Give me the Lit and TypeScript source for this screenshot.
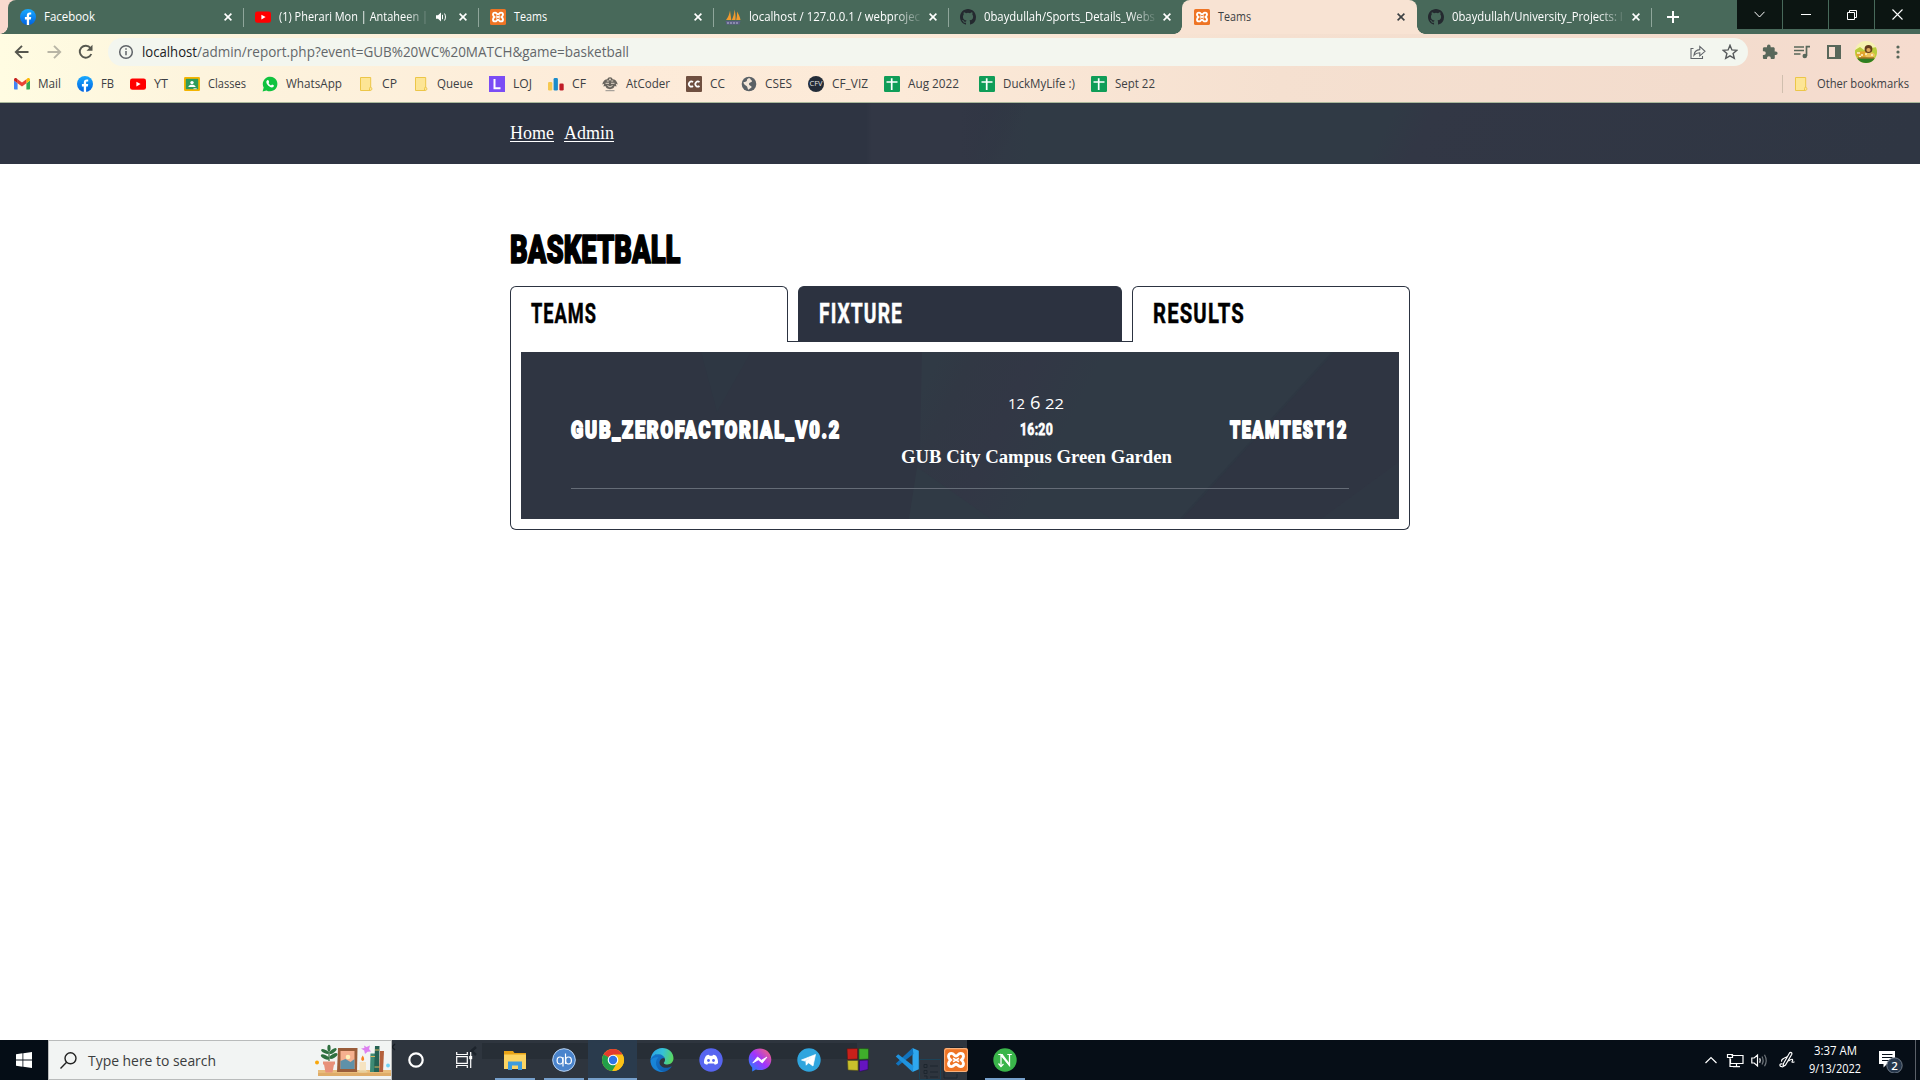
import { LitElement, html, css, svg, type TemplateResult } from "lit";
import { customElement } from "lit/decorators.js";

/** Text set to an exact width; the capitals are centred in the line box. */
const fit = (text: string, width: number, size: number, cls = "", height = Math.round(size * 1.5)) => html`
  <svg class="fit ${cls}" width=${width} height=${height} font-size=${size}>
    <text x="0" y=${height / 2 + size * 0.357} textLength=${width} lengthAdjust="spacingAndGlyphs">${text}</text>
  </svg>`;

const icon = (body: TemplateResult | unknown, size = 16, box = 16) => html`
  <svg class="ic" width=${size} height=${size} viewBox="0 0 ${box} ${box}">${body}</svg>`;

const facebook = svg`<defs><linearGradient id="fbg" x2="0" y2="1"><stop stop-color="#19aaff"/><stop offset="1" stop-color="#0062e0"/></linearGradient></defs>
  <circle cx="8" cy="8" r="8" fill="url(#fbg)"/><path d="M6.8 16v-5.6H4.9V8h1.9V6.6c0-2.1 1-3.2 3-3.2.5 0 1 .1 1.4.2v2h-1c-.9 0-1.1.4-1.1 1.2V8h2.1l-.4 2.4H9.1V16z" fill="#fff"/>`;
const youtube = svg`<rect y="2.4" width="16" height="11.4" rx="2.4" fill="#f00"/><path d="M6.4 5.7v4.8L10.6 8.1z" fill="#fff"/>`;
const xampp = svg`<rect width="16" height="16" rx="1.6" fill="#ee7424"/><path d="M5 3.600c-1.300 0-2 .9-2 2s.8 1.800 1.400 2.400c-.7.600-1.400 1.300-1.400 2.400 0 1.200.8 2 2 2 1.800 0 1.600-1.600 3-1.600s1.200 1.600 3 1.600c1.200 0 2-.8 2-2 0-1.100-.7-1.800-1.400-2.400.6-.6 1.400-1.300 1.400-2.400s-.7-2-2-2c-1.800 0-1.600 1.700-3 1.700S6.800 3.600 5 3.600z" fill="none" stroke="#fff" stroke-width="1.900"/><path d="M6 6.800 10 9.200M10 6.800 6 9.200" stroke="#fff" stroke-width="1.100"/>`;
const phpmyadmin = svg`<path d="M5 1.500 6.300 11H1C3 8.500 4.500 5 5 1.500zM9.500.500C10.500 4 10.800 8 10.500 11H6.800C8.400 8 9.400 4 9.500.500zM12 2.500c1.500 2.500 3 5.500 3.500 8.500h-4.300c.8-3 1-5.500.8-8.500z" fill="#f29a2e"/><path d="M.5 12h15l-1 3.500h-13z" fill="#5c5f86"/><path d="M3 13v2M6 13v2M9 13v2M12 13v2" stroke="#c3c5da" stroke-width=".9"/>`;
const github = svg`<path fill="#24292f" d="M8 0C3.580 0 0 3.580 0 8c0 3.540 2.290 6.530 5.470 7.590.4.070.55-.17.55-.38v-1.490c-2.010.37-2.530-.49-2.690-.94-.09-.23-.48-.94-.82-1.130-.28-.15-.68-.52-.01-.53.63-.01 1.080.58 1.230.82.72 1.210 1.870.87 2.330.66.070-.52.28-.87.510-1.070-1.780-.2-3.640-.89-3.640-3.950 0-.87.31-1.590.82-2.150-.08-.2-.36-1.020.08-2.120 0 0 .67-.21 2.200.82a7.420 7.420 0 0 1 4 0c1.530-1.040 2.200-.82 2.200-.82.44 1.100.16 1.920.08 2.120.51.56.82 1.270.82 2.150 0 3.070-1.870 3.750-3.650 3.950.29.25.54.73.54 1.480v2.200c0 .21.15.46.55.38A8 8 0 0 0 16 8c0-4.420-3.580-8-8-8z"/>`;
const gmail = svg`<path d="M1 13.500h2.600V7.300L0 4.600v7.900c0 .6.400 1 1 1z" fill="#4285f4"/><path d="M12.400 13.500H15c.6 0 1-.4 1-1V4.600l-3.600 2.700z" fill="#34a853"/><path d="M12.400 3.300v4L16 4.600V3.500c0-1.300-1.500-2-2.500-1.200z" fill="#fbbc04"/><path d="M3.600 7.300v-4L8 6.600l4.400-3.300v4L8 10.600z" fill="#ea4335"/><path d="M0 3.500v1.100l3.600 2.700v-4L2.500 2.300C1.500 1.500 0 2.200 0 3.500z" fill="#c5221f"/>`;
const classroom = svg`<rect y="1" width="16" height="14" rx="1.200" fill="#f4b400"/><rect x="1.800" y="2.800" width="12.400" height="10.400" fill="#2e9b5b"/><circle cx="8" cy="6.600" r="1.700" fill="#fff"/><path d="M4.300 11c.3-1.800 2-2.300 3.700-2.300s3.400.5 3.700 2.300z" fill="#fff"/><path d="M9.500 13.200h3.200v-1H9.500z" fill="#e0e0e0"/>`;
const whatsapp = svg`<path d="M.6 15.500 1.700 11.600A7.300 7.300 0 1 1 4.500 14.400z" fill="#10c33f"/><path d="M5.300 4.300c.9-.7 1.300 0 1.800 1.600.1.400-.6 1-.6 1.200.5 1.100 1.400 1.900 2.500 2.300.3 0 .8-.9 1.100-.9.500.1 1.800.8 1.800 1 .1 1.200-1 2-2 2C7.700 11.400 4.500 8.500 4.300 6c0-.6.300-1.200 1-1.700z" fill="#fff"/>`;
const folder = svg`<path d="M2.500 1.500h10.200v9.700c1 .3 1.100.9 1.100 1.600 0 1.200-.5 1.700-1.700 1.700H2.500z" fill="#fde595" stroke="#ecc648"/><path d="M11.500 14.500v-2c0-.9.400-1.300 1.200-1.300" fill="none" stroke="#ecc648"/>`;
const loj = svg`<rect width="16" height="16" fill="#7b4df5"/><path d="M5.500 3v9.300h6" fill="none" stroke="#fff" stroke-width="2"/>`;
const codeforces = svg`<rect x="0" y="6" width="4.300" height="8.500" rx="1.200" fill="#f6c850"/><rect x="5.600" y="2" width="4.300" height="12.500" rx="1.200" fill="#1b8ccb"/><rect x="11.400" y="7.500" width="4.300" height="7" rx="1.200" fill="#c01c28"/>`;
const atcoder = svg`<path d="M8 1.200c1.500 0 2.500.8 2.600 2C13 3.200 15 5 15.800 8.500l-2-.8.800 2.800-2-.6c-.5 1.800-1.800 2.900-4.600 3.300-2.800-.4-4.100-1.500-4.600-3.300l-2 .6.800-2.800-2 .8C1 5 3 3.200 5.400 3.200c.1-1.200 1.100-2 2.600-2z" fill="#6a655e"/><path d="M4.800 5h2M9.200 5h2M3.500 7.300h3.500M9 7.300h3.500M5.500 9.500 8 11l2.500-1.500" stroke="#f1e4d4" stroke-width=".9" fill="none"/><circle cx="8" cy="3.500" r=".9" fill="#ece0d0"/><path d="M3.500 14.700h9" stroke="#777" stroke-width=".8"/>`;
const codechef = svg`<rect width="16" height="16" rx="1" y="0" fill="#6f4f40"/><path d="M7 6.200A2.500 2.500 0 1 0 7 10M13.500 6.200a2.500 2.500 0 1 0 0 3.800" fill="none" stroke="#fff" stroke-width="1.700"/>`;
const globe = svg`<circle cx="8" cy="8" r="7.300" fill="#5a6166"/><path d="M2.500 6c2 0 3.500-.5 3.500-2s1.500-2 3-1.800C9.500 4 11 4 11 5.200 10.500 6.800 8 6 8 8s3 1.500 2.500 3.200S8 12 8 13.700C6 13 7 11 5.500 10S2.500 8.500 2.500 6z" fill="#f3e6d8"/>`;
const cfviz = svg`<circle cx="8" cy="8" r="8" fill="#232c38"/><text x="1.500" y="10.400" font-size="6.500" textLength="13" lengthAdjust="spacingAndGlyphs" fill="#e6e6e6">CFV</text>`;
const sheets = svg`<rect width="16" height="16" rx="1.200" fill="#0f9d58"/><path d="M2.500 6h11M7.700 2.200V14" stroke="#fff" stroke-width="1.700"/>`;

const closeX = () => html`<svg class="ic close" width="8" height="8" viewBox="0 0 8 8"><path d="M.6.6 7.400 7.400M7.400.6.6 7.400" stroke="currentColor" stroke-width="1.600"/></svg>`;

interface Tab { icon: unknown; text: string; width: number; fade?: boolean; audio?: boolean; cls?: string }
const tabs: Tab[] = [
  { icon: facebook, text: "Facebook", width: 51, cls: "first" },
  { icon: youtube, text: "(1) Pherari Mon | Antaheen |", width: 149, fade: true, audio: true },
  { icon: xampp, text: "Teams", width: 33 },
  { icon: phpmyadmin, text: "localhost / 127.0.0.1 / webprojec", width: 171, fade: true },
  { icon: github, text: "0baydullah/Sports_Details_Webs", width: 171, fade: true, cls: "flush" },
  { icon: xampp, text: "Teams", width: 33, cls: "active" },
  { icon: github, text: "0baydullah/University_Projects: I", width: 171, fade: true, cls: "last" },
];

const bookmarks: [unknown, string, number, string?][] = [
  [gmail, "Mail", 23], [facebook, "FB", 13], [youtube, "YT", 14], [classroom, "Classes", 38],
  [whatsapp, "WhatsApp", 56], [folder, "CP", 15], [folder, "Queue", 36], [loj, "LOJ", 19],
  [codeforces, "CF", 14], [atcoder, "AtCoder", 44], [codechef, "CC", 15], [globe, "CSES", 27],
  [cfviz, "CF_VIZ", 36], [sheets, "Aug 2022", 51, "wide"], [sheets, "DuckMyLife :)", 72], [sheets, "Sept 22", 40],
];

@customElement("browser-chrome")
class BrowserChrome extends LitElement {
  static styles = css`
    :host { display: block; height: 103px; background: linear-gradient(90deg, #fffce2 0, #fdf4dd 200px, #fdebd9 620px, #fcead8 900px, #f5e0d0 1280px, #f3dccd 1700px, #f6dccf 1920px); box-sizing: border-box; border-bottom: 1px solid #a9b79b; font-family: "Open Sans", "Noto Sans", sans-serif; color: #3c4043; }
    svg { display: block; flex: none; }
    .fit { fill: currentColor; overflow: visible; }
    .strip { display: flex; height: 34px; background: linear-gradient(90deg, #f9d9ce 20px, #48695a 20px); }
    .edge { width: 8px; background: radial-gradient(circle at 0 0, #f9d9ce 7.5px, #48695a 8px) 0 100% / 8px 8px no-repeat; }
    .tab { width: 235px; box-sizing: border-box; display: flex; align-items: center; padding: 0 11px 0 12px; gap: 8px; color: #fff; position: relative; }
    .tab::after { content: ""; position: absolute; right: -1px; top: 8px; height: 19px; width: 1px; background: #8fa69b; }
    .first { background: #48695a; border-top-left-radius: 8px; }
    .flush { width: 234px; }
    .flush::after { display: none; }
    .last { width: 234px; }
    .active { background: #f8e3d3; color: #3c4043; border-radius: 8px 8px 0 0; width: 235px; padding-right: 12px; }
    .last { padding-left: 11px; }
    .active::before { content: ""; position: absolute; left: -8px; bottom: 0; width: 8px; height: 8px; background: radial-gradient(circle at 0 0, transparent 7.5px, #f8e3d3 8px); }
    .active::after { right: -8px; top: auto; bottom: 0; width: 8px; height: 8px; background: radial-gradient(circle at 100% 0, transparent 7.5px, #f8e3d3 8px); }
    .fade { -webkit-mask-image: linear-gradient(90deg, #000 85%, transparent 102%); mask-image: linear-gradient(90deg, #000 85%, transparent 102%); }
    .close { margin-left: auto; }
    .plus { margin: 11px 0 0 16px; }
    .win { margin-left: auto; display: flex; height: 29px; gap: 1px; width: 183px; }
    .win span { flex: 1; background: #0c1512; display: grid; place-items: center; }
    .bar { display: flex; align-items: center; height: 28px; padding: 4px 0 0 14px; }
    .nav { display: flex; gap: 16px; width: 94px; flex: none; }
    .omni { display: flex; align-items: center; width: 1640px; flex: none; height: 28px; border-radius: 14px; background: #f3f6ef; box-sizing: border-box; padding: 0 10px 0 10px; }
    .host { color: #202124; margin-left: 8px; }
    .path { color: #63676a; }
    .right { margin-left: auto; display: flex; gap: 16px; }
    .tools { display: flex; align-items: center; gap: 16px; margin-left: 14px; flex: none; }
    .avatar { margin: 0 0 0 -3px; }
    .marks { display: flex; align-items: center; gap: 16px; height: 36px; padding: 0 11px 0 14px; }
    .mark { display: flex; align-items: center; gap: 8px; }
    .wide { margin-right: 4px; }
    .other { margin-left: auto; border-left: 1px solid #d0bfae; padding-left: 10px; }
  `;
  render() {
    return html`
      <div class="strip">
        <div class="edge"></div>
        ${tabs.map(t => html`<div class="tab ${t.cls ?? ""}">
          ${icon(t.icon)}${fit(t.text, t.width, 12, t.fade ? "fade" : "")}
          ${t.audio ? html`<svg width="11" height="10" viewBox="0 0 11 10"><path d="M0 3.200h2L5 .5v9L2 6.800H0z" fill="#fff"/><path d="M6.500 2.800v4.400M8.500 1.500c1.300 2 1.300 5 0 7" stroke="#fff" fill="none"/></svg>` : ""}
          ${closeX()}</div>`)}
        <svg class="plus" width="12" height="12" viewBox="0 0 12 12"><path d="M6 0v12M0 6h12" stroke="#fff" stroke-width="2"/></svg>
        <div class="win">
          <span><svg width="11" height="7" viewBox="0 0 11 7"><path d="M.5.8 5.500 6 10.500.8" fill="none" stroke="#fff"/></svg></span>
          <span><svg width="10" height="2" viewBox="0 0 10 2"><path d="M0 .5h10" stroke="#fff"/></svg></span>
          <span><svg width="10" height="10" viewBox="0 0 10 10"><path d="M.5 2.500h7v7h-7zM2.500 2.500v-2h7v7h-2" fill="none" stroke="#fff"/></svg></span>
          <span><svg width="11" height="11" viewBox="0 0 11 11"><path d="M.5.500l10 10M10.500.500l-10 10" stroke="#fff" stroke-width="1.100"/></svg></span>
        </div>
      </div>
      <div class="bar">
        <div class="nav">
          ${icon(svg`<path d="M14.500 8H2M8 1.800 1.800 8 8 14.200" fill="none" stroke="#56574e" stroke-width="1.900"/>`)}
          ${icon(svg`<path d="M1.500 8H14M8 1.800 14.200 8 8 14.200" fill="none" stroke="#b8b5a5" stroke-width="1.900"/>`)}
          ${icon(svg`<path d="M13.300 10A6 6 0 1 1 12.500 4" fill="none" stroke="#56574e" stroke-width="1.900"/><path d="M14.500.800v6H8.500z" fill="#56574e"/>`)}
        </div>
        <div class="omni">
          ${icon(svg`<circle cx="8" cy="8" r="6.300" fill="none" stroke="#5f6368" stroke-width="1.500"/><path d="M8 7v4.300M8 4.300v1.500" stroke="#5f6368" stroke-width="1.500"/>`)}
          ${fit("localhost", 55, 14, "host")}${fit("/admin/report.php?event=GUB%20WC%20MATCH&game=basketball", 432, 14, "path")}
          <div class="right">
            ${icon(svg`<path d="M3.500 4.500H1v10h11.500V12" fill="none" stroke="#5f6368" stroke-width="1.100"/><path d="M4 11.200c.3-3.700 2-5.400 5.800-5.600V2.400l5.200 4.900-5.200 4.600V8.800c-2.500 0-4.300.6-5.800 2.400z" fill="none" stroke="#5f6368" stroke-width="1.100"/>`)}
            ${icon(svg`<path d="M8 1.300 9.900 5.900 14.900 6.300 11.100 9.500 12.300 14.400 8 11.800 3.700 14.400 4.900 9.500 1.100 6.300 6.100 5.900z" fill="none" stroke="#56595b" stroke-width="1.400"/>`)}
          </div>
        </div>
        <div class="tools">
          ${icon(svg`<path d="M13.700 7.400h-1V4.600c0-.8-.6-1.400-1.400-1.400H8.600v-1a1.800 1.800 0 0 0-3.600 0v1H2.300C1.500 3.200.9 3.800.9 4.600v2.600h1a1.900 1.900 0 0 1 0 3.800h-1v2.700c0 .8.6 1.400 1.400 1.400H5v-1a1.900 1.900 0 0 1 3.800 0v1h2.600c.8 0 1.400-.6 1.400-1.400V11h1a1.800 1.800 0 0 0 0-3.600z" fill="#58675a"/>`)}
          ${icon(svg`<path d="M0 3h10M0 6.500h10M0 10h6.500M12.500 12V2.600H16" fill="none" stroke="#58675a" stroke-width="1.700"/><circle cx="10.800" cy="12" r="2.300" fill="#58675a"/>`)}
          ${icon(svg`<path d="M2 2h12v12H2z" fill="none" stroke="#58675a" stroke-width="2"/><path d="M9 2h5v12H9z" fill="#58675a"/>`)}
          <svg class="avatar" width="22" height="22" viewBox="0 0 22 22"><defs><clipPath id="av"><circle cx="11" cy="11" r="11"/></clipPath></defs><g clip-path="url(#av)"><rect width="22" height="22" fill="#f6f2b0"/><path d="M0 9 5 6l4 3 7-2 6-1v16H0z" fill="#b9cc3c"/><path d="M0 17.500h22V22H0z" fill="#2f7d22"/><ellipse cx="8" cy="13.500" rx="7" ry="3.300" fill="#e3a62f"/><ellipse cx="15" cy="14" rx="5" ry="3" fill="#efc25a"/><circle cx="13.500" cy="8" r="3.900" fill="#633d1c"/><circle cx="13.500" cy="9" r="2.100" fill="#e0a95c"/><path d="M2 12h3M6 14h2M10 13h2M16 14h2M4 15.500h2" stroke="#fff3cc" stroke-width="1.300"/><path d="M3 17h16" stroke="#8a4a18"/></g></svg>
          ${icon(svg`<g fill="#58675a"><circle cx="5" cy="3" r="1.600"/><circle cx="5" cy="8" r="1.600"/><circle cx="5" cy="13" r="1.600"/></g>`)}
        </div>
      </div>
      <div class="marks">
        ${bookmarks.map(([i, t, w, c]) => html`<div class="mark ${c ?? ""}">${icon(i)}${fit(t, w, 12)}</div>`)}
        <div class="mark other">${icon(folder)}${fit("Other bookmarks", 92, 12)}</div>
      </div>`;
  }
}

@customElement("match-page")
class MatchPage extends LitElement {
  static styles = css`
    :host { display: block; height: 937px; background: #fff; font-family: "Liberation Serif", serif; }
    svg { display: block; flex: none; }
    .fit { fill: currentColor; overflow: visible; }
    .head { display: flex; gap: 10px; height: 61px; padding: 0 510px; box-sizing: border-box; color: #fff; font-size: 18px; line-height: 61px; background: linear-gradient(90deg, transparent 866px, #323745 872px, #323745 960px, transparent 1030px), linear-gradient(118deg, #2e3442 0, #2e3442 860px, #303a45 910px, #303a45 1235px, #323745 1270px, #2f3643 1700px); }
    .head a { color: #fff; text-decoration: underline; text-underline-offset: 2px; }
    main { width: 900px; margin: 0 auto; padding-top: 58px; }
    .display { font-family: Roboto, "DejaVu Sans Condensed", sans-serif; font-weight: 900; stroke: currentColor; stroke-width: 1.7; stroke-linejoin: round; }
    .team { letter-spacing: 2.4px; stroke-width: 1.9; margin-top: -4px; }
    .label { font-family: Roboto, sans-serif; font-weight: 700; letter-spacing: 1.6px; stroke: currentColor; stroke-width: .5; }
    .time { letter-spacing: .4px; stroke-width: .8; }
    .tabs { display: flex; margin-top: 11px; height: 56px; }
    .tab { width: 278px; box-sizing: border-box; border: 1px solid #2c3341; border-bottom: 0; border-radius: 6px 6px 0 0; padding: 8px 0 0 20px; }
    .tab.on { width: 324px; background: #2c3240; color: #fff; }
    .gap { width: 10px; box-sizing: border-box; border-bottom: 1px solid #2c3341; }
    .body { height: 188px; box-sizing: border-box; border: 1px solid #2c3341; border-top: 0; border-radius: 0 0 6px 6px; padding: 10px; display: flex; }
    .match { position: relative; flex: 1; padding: 37px 50px 0; color: #fff; background: #2f3542; display: flex; flex-direction: column; }
    .facets { position: absolute; inset: 0; }
    .row { position: relative; display: grid; grid-template-columns: 270px 1fr 119px; align-items: center; height: 83px; }
    .mid { display: flex; flex-direction: column; align-items: center; padding-left: 1px; }
    .date { font-family: "Open Sans", Lato, sans-serif; }
    .place { font-weight: 700; }
    .rule { position: relative; height: 1px; margin-top: 16px; background: #656c77; }
  `;
  render() {
    return html`
      <div class="head"><a>Home</a><a>Admin</a></div>
      <main>
        ${fit("BASKETBALL", 170.5, 39.3, "display", 53)}
        <div class="tabs">
          <div class="tab">${fit("TEAMS", 66, 28.2, "label", 36)}</div>
          <div class="gap"></div>
          <div class="tab on">${fit("FIXTURE", 84, 28.2, "label", 36)}</div>
          <div class="gap"></div>
          <div class="tab">${fit("RESULTS", 92, 28.2, "label", 36)}</div>
        </div>
        <div class="body">
          <div class="match">
            <svg class="facets" width="878" height="167" viewBox="0 0 878 167">
              <defs><linearGradient id="f1" gradientUnits="userSpaceOnUse" x1="400" y1="40" x2="620" y2="150"><stop stop-color="#303a45"/><stop offset=".12" stop-color="#313844"/><stop offset=".35" stop-color="#323745"/><stop offset=".6" stop-color="#303a45"/></linearGradient></defs>
              <path d="M180 0h50l-34 60z" fill="#2e3743"/>
              <path d="M401 0H812L660 167H388L399 100z" fill="url(#f1)"/>
              <path d="M388 167 396 115 470 167z" fill="#303a45"/>
              <path d="M812 0 660 167" stroke="#2e3743" stroke-width="2"/>
              <path d="M878 110v57H800z" fill="#303945" opacity=".6"/>
            </svg>
            <div class="row">
              ${fit("GUB_ZEROFACTORIAL_V0.2", 270, 24.3, "display team", 28)}
              <div class="mid">
                <svg class="fit date" width="56" height="27"><text x="0" y="20" font-size="14.500" textLength="17" lengthAdjust="spacingAndGlyphs">12</text><text x="22" y="20" font-size="18" textLength="10.500" lengthAdjust="spacingAndGlyphs">6</text><text x="37" y="20" font-size="14.500" textLength="19" lengthAdjust="spacingAndGlyphs">22</text></svg>
                ${fit("16:20", 33, 17.4, "label time", 26)}
                ${fit("GUB City Campus Green Garden", 271, 18, "place", 30)}
              </div>
              ${fit("TEAMTEST12", 118, 24.3, "display team", 28)}
            </div>
            <div class="rule"></div>
          </div>
        </div>
      </main>`;
  }
}

const explorer = svg`<path d="M1 3h9l1.500 2H23v16H1z" fill="#e8a317"/><path d="M1 6.500h22V21H1z" fill="#fcd462"/><path d="M5 13.500h14V22h-4v-4.500H9V22H5z" fill="#3e9bdc"/>`;
const qb = svg`<circle cx="12" cy="12" r="11.300" fill="#4a84cc" stroke="#b9d4f2"/><ellipse cx="8" cy="12.500" rx="2.900" ry="3.500" fill="none" stroke="#fff" stroke-width="1.200"/><path d="M11 9v9.500M13.500 5.500v10.500" stroke="#fff" stroke-width="1.200"/><ellipse cx="16.500" cy="12.500" rx="2.900" ry="3.500" fill="none" stroke="#fff" stroke-width="1.200"/>`;
const chrome = svg`<circle cx="12" cy="12" r="11" fill="#fbc116"/><path d="M12 12 2.500 6.500A11 11 0 0 1 21.500 6.500z" fill="#e33b2e"/><path d="M2.500 6.500A11 11 0 0 0 11.300 23L16.500 14z" fill="#229f49"/><path d="M12 6.500h9.500A11 11 0 0 1 11.300 23L16.800 14.800z" fill="#fbc116"/><circle cx="12" cy="12" r="5.300" fill="#fff"/><circle cx="12" cy="12" r="4.200" fill="#2f75e6"/>`;
const edge = svg`<defs><linearGradient id="e1" x1="0" y1=".3" x2="1" y2=".5"><stop stop-color="#2aa3e8"/><stop offset=".5" stop-color="#35c1d8"/><stop offset="1" stop-color="#5ad85c"/></linearGradient><linearGradient id="e2" x2="1" y2="1"><stop stop-color="#1577d0"/><stop offset="1" stop-color="#0f5aa8"/></linearGradient></defs>
  <path d="M.5 12.500C.5 8 4 6 8.500 6c4 0 6 2 6.500 4.500-3-1-5.500 1-5.500 4 0 3.800 4.500 6.300 9 5 1.500-.4 2.500-1 3.300-1C19.500 22 16 24 12 24 5 24 .5 19 .5 12.500z" fill="url(#e2)"/>
  <path d="M8.500 9.500C6.500 11 6 13 6 15c0 4.500 3.500 8.300 8 8.700C8 25 .5 20 .5 12.500 3 9.500 6 9 8.500 9.500z" fill="#1b8ee0" opacity=".7"/>
  <path d="M.6 11.500C1.200 5 6 0 12.200 0 18.800 0 23.500 4.800 23.500 10.300c0 3.700-2.700 6.200-6 6.200-2.300 0-4-.7-3.700-1.800.9-1 1.300-2 1.200-3.200C14.700 8.300 11.700 6.300 8 6.300 4.500 6.300 1.800 8.300.6 11.500z" fill="url(#e1)"/>`;
const discord = svg`<circle cx="12" cy="12" r="11.700" fill="#5765f0"/><path d="M7 7.700c1-.5 2-.8 3-.9l.5.900h3l.5-.9c1 .1 2 .4 3 .9 1.500 2.300 2.200 4.800 2 7.600-1 .8-2 1.200-3.200 1.500l-.8-1.300H9l-.8 1.300c-1.200-.3-2.200-.7-3.200-1.500-.2-2.800.5-5.300 2-7.600z" fill="#fff"/><circle cx="9.500" cy="12.500" r="1.400" fill="#5765f0"/><circle cx="14.500" cy="12.500" r="1.400" fill="#5765f0"/>`;
const messenger = svg`<defs><linearGradient id="ms" x1="0" y1="1" x2="1" y2="0"><stop stop-color="#0a8fff"/><stop offset=".5" stop-color="#a033ff"/><stop offset="1" stop-color="#ff6a68"/></linearGradient></defs><path d="M12 .5C5.500.5.700 5.200.700 11.500c0 3.200 1.300 6 3.500 8v4l3.700-2c1.300.4 2.700.6 4.100.6 6.500 0 11.300-4.500 11.300-10.600C23.300 5.200 18.500.5 12 .5z" fill="url(#ms)"/><path d="M4.800 15 9.500 9l4 3.200L19 9l-4.700 6-4-3.200z" fill="#fff" stroke="#fff" stroke-width=".8"/>`;
const telegram = svg`<circle cx="12" cy="12" r="11.700" fill="#2fa5de"/><path d="M4.500 12 18.500 6.500 16 18l-4.500-3.200-2.300 2.400-.4-4.200L16 8.500 7.500 13z" fill="#fff" stroke="#fff" stroke-width=".7"/>`;
const codeblocks = svg`<path d="M1 .8 11.500.5V11L1.500 11.500z" fill="#c9201a" stroke="#5a1512" stroke-width=".6"/><path d="M13 .5 22.500.800V11L13 11.500z" fill="#3fae2b" stroke="#1f4d18" stroke-width=".6"/><path d="M1.500 12.500H12V22.500L2 22z" fill="#c9c02b" stroke="#55511a" stroke-width=".6"/><path d="M13.500 12.500 22 12v9.500L13.500 23.500z" fill="#6514c0" stroke="#2a0a55" stroke-width=".6"/>`;
const vscode = svg`<path d="M17.500 0 23.800 2.800v18.400L17.500 24z" fill="#2ea8f0"/><path d="M17.500 0 .8 15.500 3.200 17.800 18.500 6z" fill="#1173bd"/><path d="M17.500 24 .8 8.500 3.200 6.200 18.500 18z" fill="#1f93de"/>`;
const ncircle = svg`<circle cx="12" cy="12" r="11.700" fill="#3ab54a"/><path d="M8 18.500V7L16.500 17.500V6.500" fill="none" stroke="#fff" stroke-width="1.300"/><path d="M7.300 6.500h2.500l7.200 9.500v1.500h-1z" fill="#fff"/><path d="M5.300 6.500h4.500M14.300 6.500h4.500M5.500 15.500 8 18.500l2.500-2.500" fill="none" stroke="#fff" stroke-width="1.200"/>`;
const xamppBig = svg`<g transform="scale(1.500)">${xampp}<rect x=".4" y=".4" width="15.200" height="15.200" rx="1.600" fill="none" stroke="#f7b27f" stroke-width=".7"/></g>`;

const apps: [unknown, string][] = [
  [explorer, "open"], [qb, "open"], [chrome, "open now"], [edge, ""], [discord, ""], [messenger, ""],
  [telegram, ""], [codeblocks, ""], [vscode, ""], [xamppBig, ""], [ncircle, "open"],
];

@customElement("task-bar")
class TaskBar extends LitElement {
  static styles = css`
    :host { display: flex; position: relative; height: 40px; background: linear-gradient(#272e36, #272e36) 482px 3px / 375px 16px no-repeat, linear-gradient(90deg, #2e353e 967px, #060e17 967px); color: #fff; font-family: "Open Sans", "Noto Sans", sans-serif; }
    svg { display: block; flex: none; }
    .fit { fill: currentColor; overflow: visible; }
    .ghost { position: absolute; left: 392px; top: 0; }
    .start { width: 48px; display: grid; place-items: center; background: #050d16; }
    .search { width: 344px; box-sizing: border-box; border: 1px solid #b9bbbb; background: #f2f4f3; display: flex; align-items: center; color: #3b3d3e; padding-left: 11px; gap: 11px; }
    .art { margin: -5px 0 0 auto; }
    .btn { width: 48px; display: grid; place-items: center; position: relative; }
    .apps { display: flex; margin-left: 2px; position: relative; }
    .app { width: 49px; height: 40px; display: grid; place-items: center; position: relative; }
    .open::after { content: ""; position: absolute; bottom: 0; left: 5px; right: 4px; height: 2px; background: #76a0cc; }
    .now { background: #2a3b4d; }
    .now::after { left: 0; right: 0; }
    .tray { margin-left: auto; display: flex; align-items: center; }
    .clock { display: flex; flex-direction: column; align-items: center; width: 54px; margin-left: 13px; }
    .note { margin-left: 17px; }
    .peek { width: 1px; height: 40px; background: #5a6068; margin: 0 4px 0 11px; }
  `;
  render() {
    return html`
      <svg class="ghost" width="575" height="40" viewBox="0 0 575 40" fill="none">
        <path d="M3 4 0 7l3 3" stroke="#161c23" stroke-width="1.300"/><path d="M84 7l-4.500 4 4.500 4" stroke="#1d242c" stroke-width="2.500"/>
        <path d="M527.500 19.500h21v20h-21z" stroke="#1c4358"/>
        <path d="M532 24.500h3v3h-3zM532 30.500h3v3h-3zM532 36h3v3M538 26h8M538 32h8M538 37h8" stroke="#1d262e"/>
        <path d="M552 30v8h13v-4M558 7.500h13" stroke="#1d262e"/>
      </svg>
      <div class="start"><svg width="16" height="16" viewBox="0 0 16 16"><path d="M0 2.200 6.500 1.300v6.300H0zM7.300 1.200 16 0v7.600H7.300zM0 8.400h6.500v6.300L0 13.800zM7.300 8.400H16V16l-8.700-1.200z" fill="#fff"/></svg></div>
      <div class="search">
        <svg width="17" height="17" viewBox="0 0 17 17"><circle cx="10.500" cy="6.300" r="5.500" fill="none" stroke="#222" stroke-width="1.400"/><path d="M6.600 10.300.5 16.400" stroke="#222" stroke-width="1.400"/></svg>
        ${fit("Type here to search", 128, 15.2)}
        <svg class="art" width="76" height="38" viewBox="0 0 76 38">
          <path d="M3 31h74v3H3z" fill="#e9bd7c"/><path d="M3 34h74v3H3z" fill="#dfac68"/>
          <circle cx="2" cy="23.500" r="2" fill="#f9a70b"/>
          <path d="M14 22V9" stroke="#2c6b3a" stroke-width="1.200"/>
          <g fill="#2f7040"><ellipse cx="10" cy="18" rx="4.500" ry="1.900" transform="rotate(25 10 18)"/><ellipse cx="18.500" cy="17" rx="4.500" ry="1.900" transform="rotate(-30 18.500 17)"/><ellipse cx="10" cy="12.500" rx="4.200" ry="1.700" transform="rotate(25 10 12.500)"/><ellipse cx="18" cy="12" rx="4.200" ry="1.700" transform="rotate(-35 18 12)"/><ellipse cx="14" cy="9" rx="1.600" ry="3.200"/></g>
          <path d="M8 22.500h12v3h-1l-1.500 8h-7L9 25.500H8z" fill="#e8917a"/>
          <path d="M23 9h19.500L42 33H22z" fill="#9a5d3a"/><path d="M25.500 12h14v18H25.500z" fill="#f6b08f"/><circle cx="33" cy="18" r="2.300" fill="#fff0b8"/><path d="M25.500 22l5-2 5 3 4-3v10h-14z" fill="#5f91a9"/>
          <path d="M44.500 23h6.500v10h-6.500z" fill="#f6e3c0"/><ellipse cx="47.700" cy="32.500" rx="5" ry="1.200" fill="#e8cf9c"/><path d="M47.700 16.500c2 3 2 5 0 5.500-2-.5-2-2.500 0-5.500z" fill="#f58220"/>
          <path d="M49 6.500 51.500 8 55 6.500 54 10l2 2.500-3.500.2L50 15l-.8-3.500L46 9.500l3.500-.5z" fill="#dd80f0"/>
          <path d="M55.500 14.500h4.500V33h-5z" fill="#3e8a74"/><path d="M60 7h4.500L64 33h-5z" fill="#246253"/><path d="M65 12h4l-1 21h-4z" fill="#b4603c"/><path d="M60 11h4.500M59.500 28h5M55.500 17.500h4.500" stroke="#d9b45d"/>
          <circle cx="73" cy="26.500" r="1.900" fill="#6fd2f5"/>
        </svg>
      </div>
      <div class="btn"><svg width="16" height="16" viewBox="0 0 16 16"><circle cx="8" cy="8" r="6.700" fill="none" stroke="#fff" stroke-width="2.200"/></svg></div>
      <div class="btn"><svg width="17" height="16" viewBox="0 0 17 16"><path d="M.7 0v2.500h10.600V0M.7 16v-2.500h10.600V16M.7 4.700h10.600v6.600H.7zM14.700 0v16" fill="none" stroke="#fff" stroke-width="1.200"/><path d="M13.200 4h3v3.200h-3z" fill="#fff"/></svg></div>
      <div class="apps">${apps.map(([i, c]) => html`<div class="app ${c}">${icon(i, 24, 24)}</div>`)}</div>
      <div class="tray">
        <svg width="90" height="18" viewBox="0 0 90 18" fill="none" stroke="#fff" stroke-width="1.200">
          <path d="M.5 12 6 6.500 11.500 12"/>
          <path d="M26.500 4.500H38v8H25.500V8M31.500 12.500v3M28 15.700h7M22.500 3.500h5v3h-5zM25 6.500v9h3"/>
          <g transform="translate(1 0)"><path d="M45.800 7h2.400L51.500 4v11L48.200 12h-2.400zM53.700 7.300c.7 1.300.7 3 0 4.400"/><path d="M56 5.500c1.300 2.300 1.300 5.700 0 8M58.500 3.700c2 3.500 2 8.100 0 11.600" stroke="#70767c"/></g>
          <g transform="translate(4 0)"><path d="M74.500 12.500 80.500 2c1-1.200 3-.3 2.300 1.300L76.500 14 74 15.500zM78.500 5.500c-4.500 1.700-7 4-5.500 5M79.500 10c3.500-2.700 5-2 3.700.3-.6 1.200.6 1.200 2.300.4M73.500 13c-3.300-1-3.500 3-.3 2.500"/></g>
        </svg>
        <div class="clock">${fit("3:37 AM", 43, 12)}${fit("9/13/2022", 52, 12)}</div>
        <svg class="note" width="25" height="26" viewBox="0 0 25 26"><path d="M0 4h16v13H8l-3.500 3.500V17H0z" fill="#fff"/><path d="M3 7.500h10.500M3 10.500h10.500M3 13.500h7" stroke="#07101a" stroke-width="1.100"/><circle cx="15.500" cy="18.500" r="7.700" fill="#26374c" stroke="#78828e" stroke-width=".9"/><text x="15.500" y="22.700" font-size="11.500" font-weight="600" text-anchor="middle" fill="#fff">2</text></svg>
        <div class="peek"></div>
      </div>`;
  }
}

@customElement("app-root")
class AppRoot extends LitElement {
  static styles = css`
    :host { display: block; width: 1920px; height: 1080px; overflow: hidden; background: #fff; }
  `;
  render() {
    return html`<browser-chrome></browser-chrome><match-page></match-page><task-bar></task-bar>`;
  }
}
